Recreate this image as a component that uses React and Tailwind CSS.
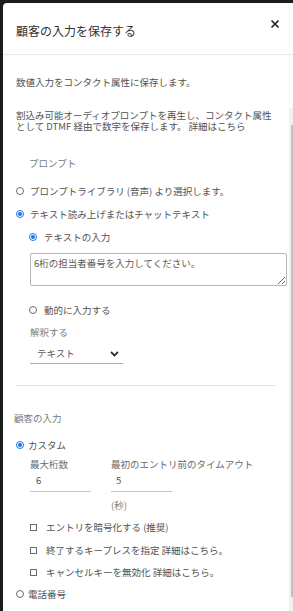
import React from "react";

const F = { fontFamily: '"Noto Sans CJK JP", "Noto Sans", sans-serif' };

function Radio({ checked }) {
  return (
    <span
      className={`flex h-[8px] w-[8px] shrink-0 items-center justify-center rounded-full border ${
        checked ? "border-[#1a73e8]" : "border-[#6b6b6b]"
      } bg-white`}
    >
      {checked && <span className="h-[4px] w-[4px] rounded-full bg-[#1a73e8]" />}
    </span>
  );
}

function Checkbox() {
  return <span className="block h-[7px] w-[7px] shrink-0 border border-[#6b6b6b] bg-white" />;
}

export default function App() {
  return (
    <div
      className="h-[611px] w-[293px] overflow-hidden bg-[#1c1c1c] pl-[3px] pt-[3px]"
      style={F}
    >
      <div className="flex h-full flex-col rounded-tl-[4px] bg-white">
        <div className="flex h-[52px] shrink-0 items-center justify-between border-b border-[#e8e8e8] pl-[13px] pr-[13px]">
          <span className="pt-[5px] text-[12px] leading-[14px] text-[#333]">顧客の入力を保存する</span>
          <svg width="10" height="10" viewBox="0 0 10 10" className="mb-[9px]">
            <path d="M1.5 1.5 L8.5 8.5 M8.5 1.5 L1.5 8.5" stroke="#222" strokeWidth="1.7" />
          </svg>
        </div>
        <div className="flex min-h-0 flex-1">
          <div className="flex-1 pl-[13px] text-[9.5px] text-[#525252]">
            <p className="mt-[21px] leading-[12px]">数値入力をコンタクト属性に保存します。</p>
            <p className="mt-[22px] leading-[11px]">
              割込み可能オーディオプロンプトを再生し、コンタクト属性
              <br />
              として DTMF 経由で数字を保存します。 詳細はこちら
            </p>
            <p className="ml-[13px] mt-[25px] leading-[12px] text-[#7a7a7a]">プロンプト</p>
            <div className="mt-[16px] flex h-[12px] items-center gap-[6px]">
              <Radio />
              <span>プロンプトライブラリ (音声) より選択します。</span>
            </div>
            <div className="mt-[11px] flex h-[12px] items-center gap-[6px]">
              <Radio checked />
              <span>テキスト読み上げまたはチャットテキスト</span>
            </div>
            <div className="ml-[13px] mt-[11px] flex h-[12px] items-center gap-[7px]">
              <Radio checked />
              <span>テキストの入力</span>
            </div>
            <textarea
              className="ml-[14px] mt-[10px] block h-[33px] w-[257px] resize-y rounded-[2px] border border-[#b5b5b5] px-[3px] py-[3px] text-[9.5px] leading-[12px] text-[#525252] outline-none placeholder:text-[#5a5a5a]"
              style={F}
              placeholder="6桁の担当者番号を入力してください。"
            />
            <div className="ml-[13px] mt-[18px] flex h-[12px] items-center gap-[7px]">
              <Radio />
              <span>動的に入力する</span>
            </div>
            <p className="ml-[14px] mt-[10px] leading-[12px] text-[#7a7a7a]">解釈する</p>
            <div className="ml-[14px] mt-[6px] flex h-[20px] w-[93px] items-center justify-between border-b border-[#b0b0b0] pl-[7px] pr-[4px]">
              <span className="text-[#5a5a5a]">テキスト</span>
              <svg width="9" height="6" viewBox="0 0 9 6">
                <path d="M1 1 L4.5 4.5 L8 1" fill="none" stroke="#333" strokeWidth="1.8" />
              </svg>
            </div>
            <div className="mr-[13px] mt-[21px] h-[1px] w-[260px] bg-[#e4e4e4]" />
            <p className="-ml-[2px] mt-[26px] leading-[12px] text-[#7a7a7a]">顧客の入力</p>
            <div className="mt-[15px] flex h-[12px] items-center gap-[4px]">
              <Radio checked />
              <span>カスタム</span>
            </div>
            <div className="ml-[14px] mt-[7px] flex gap-[20px]">
              <div className="w-[61px]">
                <p className="leading-[12px] text-[#6a6a6a]">最大桁数</p>
                <div className="flex h-[22px] items-center border-b border-[#c4c4c4] pl-[6px]">6</div>
              </div>
              <div className="w-[61px]">
                <p className="whitespace-nowrap leading-[12px] text-[#6a6a6a]">最初のエントリ前のタイムアウト</p>
                <div className="flex h-[22px] items-center border-b border-[#c4c4c4] pl-[5px]">5</div>
                <p className="mt-[7px] leading-[12px] text-[#7a7a7a]">(秒)</p>
              </div>
            </div>
            <div className="ml-[14px] mt-[10px] flex h-[12px] items-center gap-[9px]">
              <Checkbox />
              <span>エントリを暗号化する (推奨)</span>
            </div>
            <div className="ml-[14px] mt-[11px] flex h-[12px] items-center gap-[9px]">
              <Checkbox />
              <span>終了するキープレスを指定 詳細はこちら。</span>
            </div>
            <div className="ml-[14px] mt-[10px] flex h-[12px] items-center gap-[9px]">
              <Checkbox />
              <span>キャンセルキーを無効化 詳細はこちら。</span>
            </div>
            <div className="mt-[10px] flex h-[12px] items-center gap-[4px]">
              <Radio />
              <span>電話番号</span>
            </div>
          </div>
          <div className="mt-[53px] w-[4px] shrink-0 bg-[#f1f1f1] pl-[2px] pt-[17px]">
            <div className="h-[472px] w-[2px] bg-[#c1c1c1]" />
          </div>
        </div>
      </div>
    </div>
  );
}
